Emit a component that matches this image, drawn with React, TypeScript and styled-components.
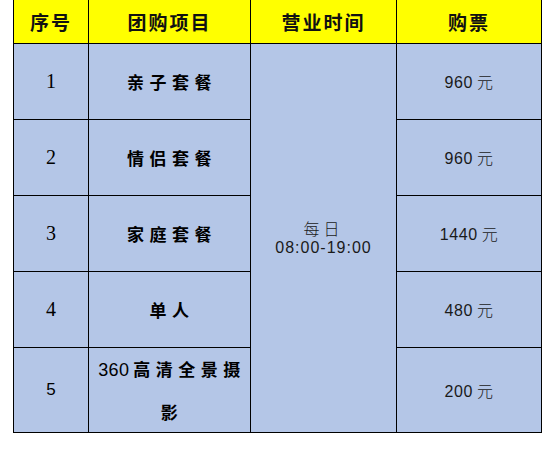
import React from "react";
import styled, { createGlobalStyle } from "styled-components";

const Global = createGlobalStyle`
  html, body { margin: 0; padding: 0; background: #ffffff; }
  body { font-family: "Liberation Sans", "Noto Sans CJK SC", sans-serif; }
`;

const Page = styled.div`
  padding: 0 0 0 13px;
`;

const Table = styled.table`
  border-collapse: collapse;
  table-layout: fixed;
  width: 528px;
  border-left: 1px solid #000;
  border-right: 1px solid #000;
  border-bottom: 1px solid #000;
`;

const HeadRow = styled.tr`
  height: 43px;
`;

const BodyRow = styled.tr<{ $h: number }>`
  height: ${(p) => p.$h}px;
`;

const Th = styled.th`
  background: #ffff00;
  border-left: 1px solid #000;
  border-right: 1px solid #000;
  border-bottom: 1px solid #000;
  padding: 0;
  font-family: "Noto Sans CJK SC", sans-serif;
  font-weight: 700;
  font-size: 19px;
  letter-spacing: 2px;
  color: #111;
  text-align: center;
  vertical-align: middle;
`;

const Td = styled.td<{ $whiteTop?: boolean }>`
  background: #b4c6e7;
  border: 1px solid #000;
  ${(p) => (p.$whiteTop ? "border-top-color: #ffffff;" : "")}
  padding: 0;
  text-align: center;
  vertical-align: middle;
  color: #000;
`;

const Num = styled.span<{ $sans?: boolean }>`
  font-family: ${(p) => (p.$sans ? '"Liberation Sans"' : '"Liberation Serif"')}, serif;
  font-size: ${(p) => (p.$sans ? 17 : 20)}px;
`;

const Item = styled.div`
  font-family: "Noto Sans CJK SC", sans-serif;
  font-weight: 700;
  font-size: 17px;
  letter-spacing: 5.5px;
  line-height: 41px;
  padding-left: 5px;
`;

const ItemDigits = styled.span`
  font-family: "Liberation Sans", sans-serif;
  font-weight: 400;
  font-size: 18px;
  letter-spacing: 0.3px;
  margin-right: 4px;
`;

const Price = styled.span`
  font-family: "Liberation Sans", sans-serif;
  font-size: 16px;
  letter-spacing: 0.6px;
  color: #1a1a1a;
`;

const Yuan = styled.span`
  font-family: "Noto Sans CJK SC", sans-serif;
  font-weight: 300;
  font-size: 16px;
  margin-left: 4px;
`;

const Time = styled.div`
  font-family: "Liberation Sans", "Noto Sans CJK SC", sans-serif;
  font-size: 16px;
  letter-spacing: 1px;
  line-height: 20px;
  color: #1a1a1a;
`;

const TimeLabel = styled.div`
  font-family: "Noto Sans CJK SC", sans-serif;
  font-weight: 300;
  letter-spacing: 4px;
`;

type Row = { no: string; sansNo?: boolean; item: React.ReactNode; price: string; h: number };

const rows: Row[] = [
  { no: "1", item: "亲子套餐", price: "960", h: 76 },
  { no: "2", item: "情侣套餐", price: "960", h: 76 },
  { no: "3", item: "家庭套餐", price: "1440", h: 76 },
  { no: "4", item: "单人", price: "480", h: 76 },
  {
    no: "5",
    sansNo: true,
    item: (
      <>
        <ItemDigits>360</ItemDigits>高清全景摄
        <br />影
      </>
    ),
    price: "200",
    h: 84,
  },
];

export default function App() {
  return (
    <Page>
      <Global />
      <Table>
        <colgroup>
          <col style={{ width: 75 }} />
          <col style={{ width: 162 }} />
          <col style={{ width: 146 }} />
          <col style={{ width: 145 }} />
        </colgroup>
        <thead>
          <HeadRow>
            <Th>序号</Th>
            <Th>团购项目</Th>
            <Th>营业时间</Th>
            <Th>购票</Th>
          </HeadRow>
        </thead>
        <tbody>
          {rows.map((r, i) => (
            <BodyRow key={r.no} $h={r.h}>
              <Td>
                <Num $sans={r.sansNo}>{r.no}</Num>
              </Td>
              <Td>
                <Item>{r.item}</Item>
              </Td>
              {i === 0 && (
                <Td rowSpan={5}>
                  <Time>
                    <TimeLabel>每日</TimeLabel>
                    08:00-19:00
                  </Time>
                </Td>
              )}
              <Td $whiteTop={i === 3}>
                <Price>
                  {r.price}
                  <Yuan>元</Yuan>
                </Price>
              </Td>
            </BodyRow>
          ))}
        </tbody>
      </Table>
    </Page>
  );
}
